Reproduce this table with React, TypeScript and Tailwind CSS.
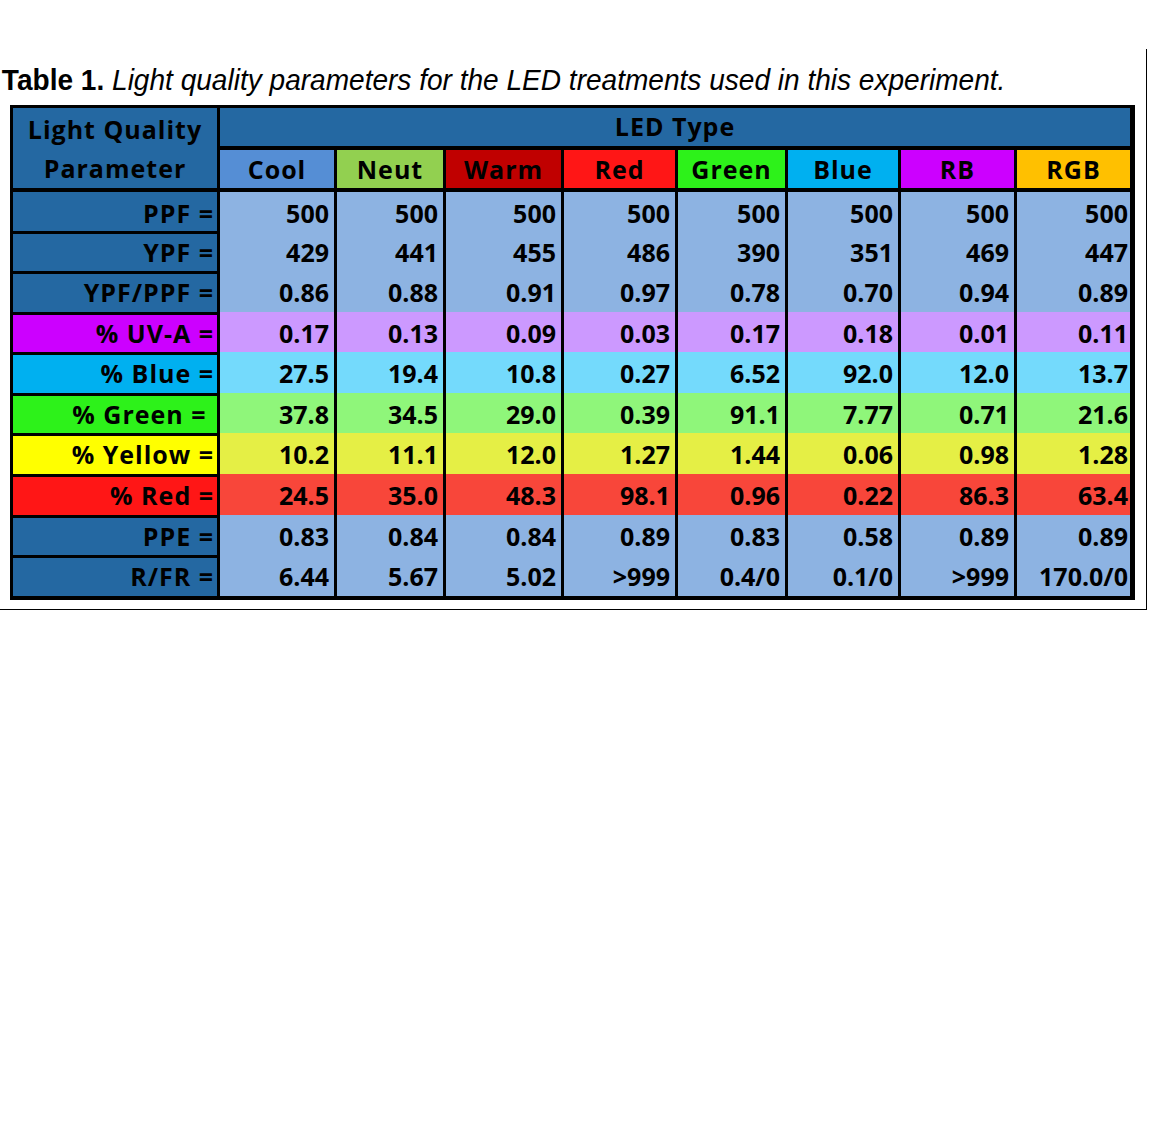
const columns = [
  { name: 'Cool', bg: 'bg-[#558ed5]' },
  { name: 'Neut', bg: 'bg-[#92d050]' },
  { name: 'Warm', bg: 'bg-[#c00000]' },
  { name: 'Red', bg: 'bg-[#ff1616]' },
  { name: 'Green', bg: 'bg-[#2df21a]' },
  { name: 'Blue', bg: 'bg-[#00b0f0]' },
  { name: 'RB', bg: 'bg-[#cc00ff]' },
  { name: 'RGB', bg: 'bg-[#ffc000]' },
];

const rows = [
  { label: 'PPF =', h: 'h-[39px]', left: 'bg-[#2468a2]', cell: 'bg-[#8db3e2]', values: ['500', '500', '500', '500', '500', '500', '500', '500'] },
  { label: 'YPF =', h: 'h-[40px]', left: 'bg-[#2468a2]', cell: 'bg-[#8db3e2]', values: ['429', '441', '455', '486', '390', '351', '469', '447'] },
  { label: 'YPF/PPF =', h: 'h-[41px]', left: 'bg-[#2468a2]', cell: 'bg-[#8db3e2]', values: ['0.86', '0.88', '0.91', '0.97', '0.78', '0.70', '0.94', '0.89'] },
  { label: '% UV-A =', h: 'h-[40px]', left: 'bg-[#cc00ff]', cell: 'bg-[#cc99ff]', values: ['0.17', '0.13', '0.09', '0.03', '0.17', '0.18', '0.01', '0.11'] },
  { label: '% Blue =', h: 'h-[41px]', left: 'bg-[#00b0f0]', cell: 'bg-[#74dafc]', values: ['27.5', '19.4', '10.8', '0.27', '6.52', '92.0', '12.0', '13.7'] },
  { label: '% Green =\u00a0', h: 'h-[40px]', left: 'bg-[#2df21a]', cell: 'bg-[#8ff67a]', values: ['37.8', '34.5', '29.0', '0.39', '91.1', '7.77', '0.71', '21.6'] },
  { label: '% Yellow =', h: 'h-[41px]', left: 'bg-[#ffff00]', cell: 'bg-[#e5ef45]', values: ['10.2', '11.1', '12.0', '1.27', '1.44', '0.06', '0.98', '1.28'] },
  { label: '% Red =', h: 'h-[41px]', left: 'bg-[#ff1616]', cell: 'bg-[#f8463a]', values: ['24.5', '35.0', '48.3', '98.1', '0.96', '0.22', '86.3', '63.4'] },
  { label: 'PPE =', h: 'h-[40px]', left: 'bg-[#2468a2]', cell: 'bg-[#8db3e2]', values: ['0.83', '0.84', '0.84', '0.89', '0.83', '0.58', '0.89', '0.89'] },
  { label: 'R/FR =', h: 'h-[40px]', left: 'bg-[#2468a2]', cell: 'bg-[#8db3e2]', values: ['6.44', '5.67', '5.02', '>999', '0.4/0', '0.1/0', '>999', '170.0/0'] },
];

const grid = 'grid grid-cols-[204px_114px_106px_115px_111px_107px_110px_113px_113px] gap-x-[3px]';

export default function App() {
  return (
    <div className="bg-white min-h-[1127px]">
      <div className="mt-[49px] w-[1147px] border-r border-b border-black pt-[13px] pb-[9px]">
        {/* caption */}
        <p className="h-[36px] pl-[2px] text-[30px] leading-[36px] text-black whitespace-nowrap origin-left scale-x-[0.935] font-['Liberation_Sans',sans-serif]">
          <span className="font-bold">Table 1.</span>{' '}
          <span className="italic">Light quality parameters for the LED treatments used in this experiment.</span>
        </p>

        {/* table */}
        <div className="mt-[7px] ml-[10px] w-[1125px] bg-black pt-[3px] pl-[3px] pr-[5px] pb-[5px] text-[25px] font-bold text-black font-['Open_Sans',sans-serif]">
          <div className={`${grid} grid-rows-[38px_38px] gap-y-[4px] tracking-[1px]`}>
            <div className="row-span-2 bg-[#2468a2] flex flex-col items-center justify-around leading-[30px] pt-[1px]">
              <span>Light Quality</span>
              <span>Parameter</span>
            </div>
            <div className="col-span-8 bg-[#2468a2] flex items-center justify-center">LED Type</div>
            {columns.map((c) => (
              <div key={c.name} className={`${c.bg} flex items-center justify-center pt-[1px]`}>
                {c.name}
              </div>
            ))}
          </div>

          <div className="mt-[4px]">
            {rows.map((r, i) => (
              <div key={r.label} className={`${grid} ${r.h}`}>
                <div
                  className={`${r.left} flex items-center justify-end pr-[3px] whitespace-pre tracking-[1px] ${
                    i === 0 ? 'pt-[3px]' : 'border-t-[3px] border-black'
                  }`}
                >
                  {r.label}
                </div>
                {r.values.map((v, j) => (
                  <div
                    key={j}
                    className={`${r.cell} flex items-center justify-end pt-[3px] ${j === 7 ? 'pr-[2px]' : 'pr-[5px]'}`}
                  >
                    {v}
                  </div>
                ))}
              </div>
            ))}
          </div>
        </div>
      </div>
    </div>
  );
}
